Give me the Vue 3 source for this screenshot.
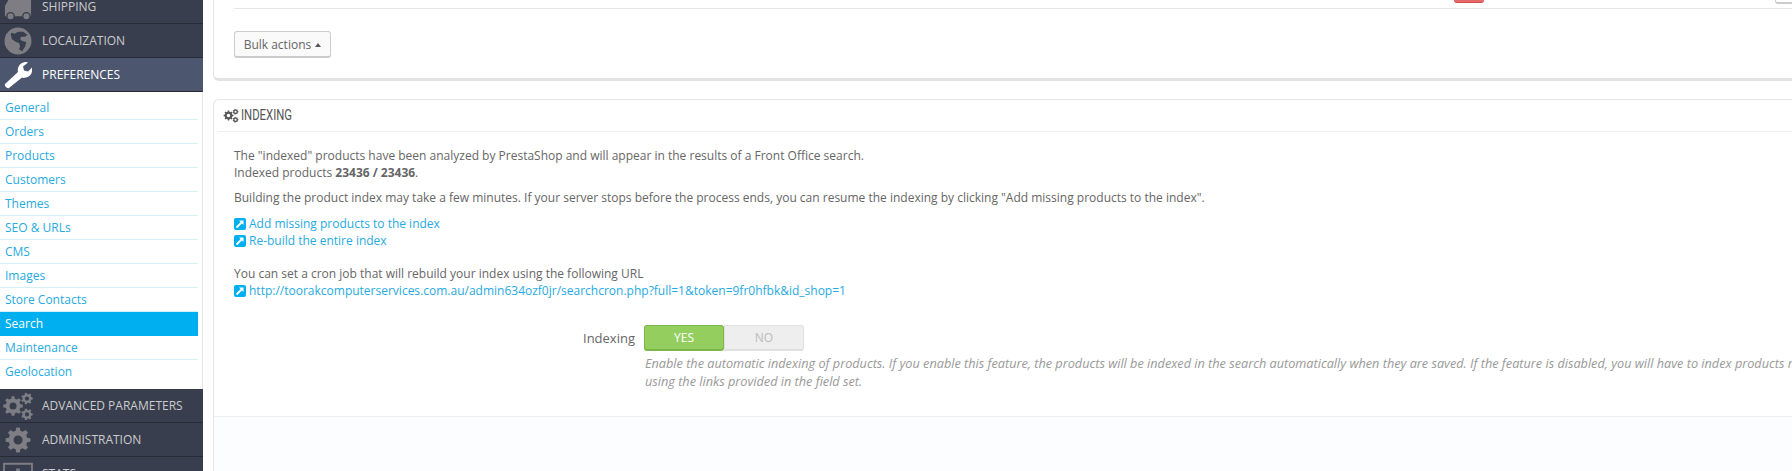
<script setup>
const subItems = ['General', 'Orders', 'Products', 'Customers', 'Themes', 'SEO & URLs', 'CMS', 'Images', 'Store Contacts', 'Search', 'Maintenance', 'Geolocation']

// builds a cog outline, the sidebar and the panel title use it at several sizes
function gear(cx, cy, r, teeth = 8) {
  const pts = []
  const step = (Math.PI * 2) / teeth
  for (let i = 0; i < teeth; i++) {
    const a = i * step
    const list = [[-0.32, 0.76], [-0.18, 1], [0.18, 1], [0.32, 0.76]]
    list.forEach(([o, k]) => {
      const x = cx + Math.cos(a + o * step) * r * k
      const y = cy + Math.sin(a + o * step) * r * k
      pts.push(x.toFixed(2) + ' ' + y.toFixed(2))
    })
  }
  const h = r * 0.36
  return `M${pts.join('L')}Z M${cx - h} ${cy}a${h} ${h} 0 1 0 ${h * 2} 0a${h} ${h} 0 1 0 ${-h * 2} 0Z`
}

const cogsPath = gear(11.7, 15, 10.5) + gear(26.6, 7, 6.3, 7) + gear(26.6, 24, 6.3, 7)
const cogPath = gear(15, 15, 13.4)
</script>

<template>
  <div class="page">
    <aside class="sidebar">
      <div class="menu-row">
        <svg class="menu-icon" viewBox="0 0 30 30">
          <path d="M1 14l4-7h5V0h19v25H1Z" />
          <circle cx="7" cy="25" r="4" stroke="#383e4e" stroke-width="1.500" />
          <circle cx="24" cy="25" r="4" stroke="#383e4e" stroke-width="1.500" />
        </svg>
        <span>Shipping</span>
      </div>
      <div class="menu-row">
        <svg class="menu-icon" viewBox="1.500 1.500 27 27">
          <path fill-rule="evenodd" d="M15 2a13 13 0 1 1 0 26a13 13 0 0 1 0-26ZM8 8l1 5 4 3 3 1 1 3-1 3 3 2 3-5 1-4-4-1-2-2 1-2 4 0 2-2-4-3-5 0-3 2-3-1Z" />
        </svg>
        <span>Localization</span>
      </div>
      <div class="menu-row active">
        <svg class="menu-icon" viewBox="1 1 28 28">
          <path d="M2 24l13-12c-1-5 2-9 7-10 1 0 2 0 3 .500l-5 4 1 4 4 1 4-4c1 4-1 9-6 10-2 .500-3 .500-4 0L6 28c-2 1-5-2-4-4Z" />
        </svg>
        <span>Preferences</span>
      </div>
      <ul class="submenu">
        <li v-for="item in subItems" :key="item" :class="{ current: item === 'Search' }">{{ item }}</li>
      </ul>
      <div class="menu-row">
        <svg class="menu-icon wide" viewBox="0 0 34 30"><path fill-rule="evenodd" :d="cogsPath" /></svg>
        <span>Advanced Parameters</span>
      </div>
      <div class="menu-row">
        <svg class="menu-icon" viewBox="0 0 30 30"><path fill-rule="evenodd" :d="cogPath" /></svg>
        <span>Administration</span>
      </div>
      <div class="menu-row">
        <svg class="menu-icon wide" viewBox="0 0 34 30">
          <path fill-rule="evenodd" d="M1 3h32v26H1ZM3 5v22h28V5ZM8 13h4v12H8ZM15 9h4v16h-4ZM22 15h4v10h-4Z" />
        </svg>
        <span>Stats</span>
      </div>
    </aside>

    <main class="content">
      <section class="panel bulk-panel">
        <div class="table-end">
          <span class="red-btn"></span>
          <span class="grey-btn"></span>
        </div>
        <button class="bulk-btn">Bulk actions <i class="caret"></i></button>
      </section>

      <section class="panel index-panel">
        <h3 class="panel-head">
          <svg class="head-icon" viewBox="0 0 34 30"><path fill-rule="evenodd" :d="cogsPath" /></svg>
          <span class="head-text">Indexing</span>
        </h3>
        <div class="panel-body">
          <p>The "indexed" products have been analyzed by PrestaShop and will appear in the results of a Front Office search.</p>
          <p>Indexed products <b>23436 / 23436</b>.</p>
          <p class="building">Building the product index may take a few minutes. If your server stops before the process ends, you can resume the indexing by clicking "Add missing products to the index".</p>
          <a class="link">
            <svg class="link-icon" viewBox="0 0 12 12"><rect width="12" height="12" rx="2" fill="#00aff0" /><path d="M2.500 9.500 8 4" stroke="#fff" stroke-width="1.800" /><path d="M5 2.500h4.500V7Z" fill="#fff" /></svg>
            Add missing products to the index
          </a>
          <a class="link">
            <svg class="link-icon" viewBox="0 0 12 12"><rect width="12" height="12" rx="2" fill="#00aff0" /><path d="M2.500 9.500 8 4" stroke="#fff" stroke-width="1.800" /><path d="M5 2.500h4.500V7Z" fill="#fff" /></svg>
            Re-build the entire index
          </a>
          <p class="cron">You can set a cron job that will rebuild your index using the following URL</p>
          <a class="link">
            <svg class="link-icon" viewBox="0 0 12 12"><rect width="12" height="12" rx="2" fill="#00aff0" /><path d="M2.500 9.500 8 4" stroke="#fff" stroke-width="1.800" /><path d="M5 2.500h4.500V7Z" fill="#fff" /></svg>
            http://toorakcomputerservices.com.au/admin634ozf0jr/searchcron.php?full=1&amp;token=9fr0hfbk&amp;id_shop=1
          </a>

          <div class="form-row">
            <label class="form-label">Indexing</label>
            <div class="switch">
              <span class="yes">YES</span>
              <span class="no">NO</span>
            </div>
          </div>
          <p class="help">Enable the automatic indexing of products. If you enable this feature, the products will be indexed in the search automatically when they are saved. If the feature is disabled, you will have to index products manually by<br>using the links provided in the field set.</p>
        </div>
      </section>
      <div class="filler"></div>
    </main>
  </div>
</template>

<style scoped>
.page {
  display: flex;
  width: 1792px;
  height: 471px;
  overflow: hidden;
  background: #fff;
  font-family: "Open Sans", sans-serif;
  font-size: 12px;
  color: #666;
}

.sidebar {
  flex: 0 0 203px;
  margin-top: -10px;
}

.menu-row {
  display: flex;
  align-items: center;
  height: 33px;
  border-bottom: 1px solid #282b36;
  background: #383e4e;
  color: #ccc;
  text-transform: uppercase;
}

.menu-row.active {
  background: #4c566f;
  color: #fff;
}

.menu-icon {
  flex: none;
  width: 28px;
  height: 28px;
  margin: 0 10px 0 4px;
  fill: #7d7d83;
}

.menu-icon.wide {
  width: 32px;
  margin: 0 8px 0 2px;
}

.active .menu-icon {
  fill: #fff;
}

.submenu {
  list-style: none;
  margin: 0;
  padding: 4px 0 5px;
  border-right: 1px solid #e6e6e6;
  background: #fff;
}

.submenu li {
  width: 193px;
  height: 23px;
  line-height: 23px;
  padding-left: 5px;
  border-bottom: 1px solid #d5eef8;
  color: #27aae2;
}

.submenu li:last-child {
  border-bottom-color: transparent;
}

.submenu li.current {
  background: #00aff0;
  border-bottom-color: #00aff0;
  color: #fff;
}

.content {
  display: flex;
  flex-direction: column;
  flex: 1;
  min-width: 0;
  margin-left: 10px;
}

.panel {
  background: #fff;
  border-left: 1px solid #e6e6e6;
}

.bulk-panel {
  flex: none;
  height: 78px;
  padding-left: 20px;
  border-bottom: 3px solid #e3e3e3;
  border-bottom-left-radius: 6px;
}

.table-end {
  position: relative;
  height: 8px;
  margin-bottom: 22px;
  border-bottom: 1px solid #e6e6e6;
}

.red-btn {
  position: absolute;
  left: 1220px;
  top: 0;
  width: 30px;
  height: 2px;
  background: #e46a6a;
  border-bottom: 1px solid #d04f4f;
  border-radius: 0 0 3px 3px;
}

.grey-btn {
  position: absolute;
  right: 0;
  top: 0;
  width: 16px;
  height: 2px;
  border: 1px solid #ccc;
  border-top: 0;
  border-right: 0;
  border-bottom-width: 2px;
  border-radius: 0 0 0 3px;
}

.bulk-btn {
  display: block;
  width: 97px;
  height: 27px;
  padding: 0;
  border: 1px solid #ccc;
  border-bottom-width: 2px;
  border-radius: 3px;
  background: #fafafa;
  color: #666;
  font-family: inherit;
  font-size: 12px;
}

.caret {
  display: inline-block;
  margin-left: 1px;
  vertical-align: 2px;
  border-left: 3px solid transparent;
  border-right: 3px solid transparent;
  border-bottom: 4px solid #555;
}

.index-panel {
  flex: none;
  margin-top: 18px;
  height: 316px;
  border-top: 1px solid #e6e6e6;
  border-bottom: 1px solid #eee;
  border-top-left-radius: 6px;
}

.filler {
  flex: 1;
  background: #fcfdfe;
  border-left: 1px solid #e6e6e6;
}

.panel-head {
  display: flex;
  align-items: center;
  gap: 2px;
  height: 30px;
  margin: 0 0 0 4px;
  padding: 0 0 1px 5px;
  border-bottom: 1px solid #eee;
  color: #555;
  font-size: 14px;
  font-weight: 400;
  text-transform: uppercase;
}

.head-text {
  display: inline-block;
  font-family: Roboto, sans-serif;
  transform: scaleX(0.81);
  transform-origin: left center;
}

.head-icon {
  width: 16px;
  height: 15px;
  fill: #555;
}

.panel-body {
  padding: 15px 0 0 20px;
}

p {
  margin: 0;
  line-height: 17px;
}

.building {
  margin-top: 8px;
  margin-bottom: 9px;
}

.link {
  display: flex;
  align-items: center;
  gap: 3px;
  height: 17px;
  color: #27aae2;
  white-space: nowrap;
}

.link-icon {
  flex: none;
  width: 12px;
  height: 12px;
}

.cron {
  margin-top: 16px;
}

.form-row {
  display: flex;
  align-items: center;
  margin-top: 26px;
}

.form-label {
  width: 401px;
  text-align: right;
  font-size: 13px;
}

.switch {
  display: flex;
  width: 160px;
  height: 26px;
  margin-left: 9px;
  text-align: center;
  line-height: 24px;
}

.switch span {
  flex: 1;
  box-sizing: border-box;
}

.yes {
  background: #93ce5e;
  border: 1px solid #7ab648;
  border-bottom-width: 2px;
  border-radius: 3px;
  color: #fff;
}

.no {
  background: #eee;
  border: 1px solid #e0e0e0;
  border-bottom-width: 2px;
  border-radius: 0 3px 3px 0;
  color: #bbb;
}

.help {
  margin: 3px 0 0 411px;
  width: 1300px;
  color: #999;
  font-size: 12.7px;
  font-style: italic;
  line-height: 18px;
  white-space: nowrap;
}
</style>
